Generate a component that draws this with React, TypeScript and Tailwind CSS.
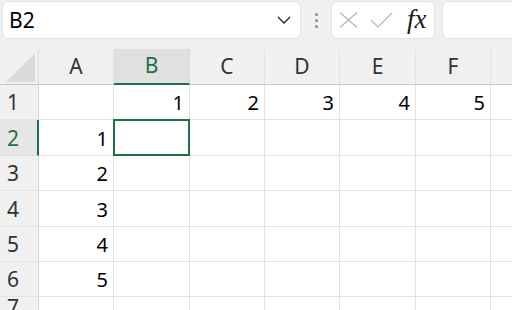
const cols = ['A', 'B', 'C', 'D', 'E', 'F', 'G']
const colW = [75, 76, 75, 75, 76, 75, 40]
const rowH = [35, 36, 35, 36, 35, 35, 20]

const data: Record<string, string> = {
  'B1': '1', 'C1': '2', 'D1': '3', 'E1': '4', 'F1': '5',
  'A2': '1', 'A3': '2', 'A4': '3', 'A5': '4', 'A6': '5',
}

const font = { fontFamily: '"Noto Sans", "Open Sans", sans-serif' }

const App = () => {
  return (
    <div className="w-[512px] h-[310px] overflow-hidden bg-white text-black" style={font}>
      {/* formula bar */}
      <div className="h-[49px] bg-[#f0f0f0] flex items-start pt-[1px] pl-[2px]">
        <div className="w-[299px] h-[38px] bg-white rounded-[6px] border border-[#e3e3e3] flex items-center pl-[6px] pr-[8px]">
          <span className="text-[21px] leading-none flex-1">B2</span>
          <svg width="14" height="8" viewBox="0 0 14 8" className="mr-[1px]">
            <path d="M1 1 L7 7 L13 1" stroke="#222" strokeWidth="1.3" fill="none" />
          </svg>
        </div>
        <div className="w-[30px] h-[38px] flex flex-col items-center justify-center gap-[3px]">
          <span className="w-[3px] h-[3px] bg-[#8a8a8a] rounded-full" />
          <span className="w-[3px] h-[3px] bg-[#8a8a8a] rounded-full" />
          <span className="w-[3px] h-[3px] bg-[#8a8a8a] rounded-full" />
        </div>
        <div className="w-[104px] h-[38px] bg-white rounded-[6px] border border-[#e3e3e3] flex items-center pl-[7px]">
          <svg width="19" height="16" viewBox="0 0 19 16">
            <path d="M1 0.5 L18 15.5 M18 0.5 L1 15.5" stroke="#b4b4b4" strokeWidth="1.2" fill="none" />
          </svg>
          <svg width="23" height="16" viewBox="0 0 23 16" className="ml-[12px]">
            <path d="M1 8 L8 15 L22 1" stroke="#b4b4b4" strokeWidth="1.2" fill="none" />
          </svg>
          <span
            className="ml-[14px] text-[27px] italic leading-none text-[#1a1a1a] -mt-[2px]"
            style={{ fontFamily: '"Liberation Serif", "DejaVu Serif", serif' }}
          >
            fx
          </span>
        </div>
        <div className="ml-[7px] flex-1 h-[38px] bg-white rounded-l-[6px] border border-r-0 border-[#e3e3e3]" />
      </div>

      {/* column headers */}
      <div className="flex h-[36px] bg-[#f0f0f0] border-b border-[#c8c8c8]">
        <div className="w-[39px] shrink-0 border-r border-[#dadada] relative">
          <div className="absolute right-[3px] bottom-[2px] w-0 h-0 border-l-[29px] border-l-transparent border-b-[29px] border-b-[#dadada]" />
        </div>
        {cols.map((c, i) => (
          <div
            key={c}
            style={{ width: colW[i] }}
            className={
              c === 'B'
                ? 'shrink-0 flex items-center justify-center text-[21px] text-[#1e7145] bg-[#e0e0e0] border-r border-[#d6d6d6] border-b-2 border-b-[#1e7145] -mb-px'
                : 'shrink-0 flex items-center justify-center text-[21px] text-[#333] border-r border-[#e2e2e2]'
            }
          >
            {c !== 'G' ? c : ''}
          </div>
        ))}
      </div>

      {/* rows */}
      {rowH.map((h, r) => {
        const n = r + 1
        const sel = n === 2
        return (
          <div key={n} className="flex" style={{ height: h }}>
            <div
              className={
                sel
                  ? 'w-[39px] shrink-0 bg-[#e6e6e6] border-r-2 border-[#1e7145] border-b border-b-[#dcdcdc] flex items-center pl-[7px] pt-[2px] text-[21px] text-[#1e7145]'
                  : 'w-[39px] shrink-0 bg-[#f0f0f0] border-r border-[#d4d4d4] border-b border-b-[#e2e2e2] flex items-center pl-[7px] pt-[2px] text-[21px] text-[#333]'
              }
            >
              {n}
            </div>
            {cols.map((c, i) => {
              const isSel = sel && c === 'B'
              return (
                <div
                  key={c}
                  style={{ width: colW[i] }}
                  className="shrink-0 border-r border-b border-[#e2e2e2] flex items-center justify-end pr-[5px] pt-[2px] text-[20px] relative"
                >
                  {data[c + n]}
                  {isSel && (
                    <div className="absolute -left-px -top-px w-[77px] h-[37px] border-2 border-[#1e7145]" />
                  )}
                </div>
              )
            })}
          </div>
        )
      })}
    </div>
  )
}

export default App
